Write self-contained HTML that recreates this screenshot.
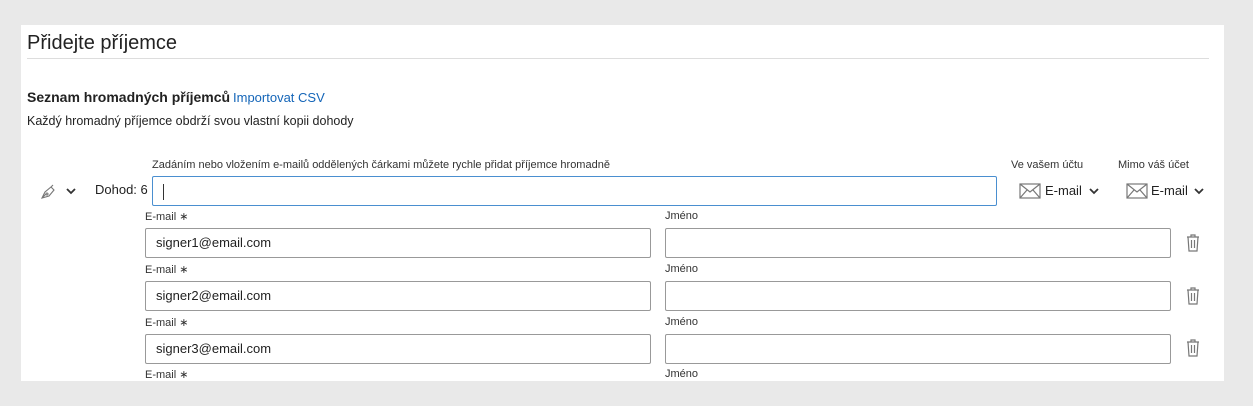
<!DOCTYPE html>
<html><head><meta charset="utf-8"><style>
body{margin:0;width:1253px;height:406px;background:#e9e9e9;font-family:"Liberation Sans",sans-serif;color:#222;position:relative;overflow:hidden}
.p{position:absolute;left:21px;top:25px;width:1203px;height:356px;background:#fff;overflow:hidden}
.a{position:absolute;white-space:nowrap}
.in{position:absolute;border:1px solid #999;border-radius:2px;background:#fff;box-sizing:border-box;height:30px;font-size:13px;line-height:28px;padding-left:10px}
.lb{font-size:11px;color:#333}
</style></head><body>
<div class="p">
<div class="a" style="left:6px;top:7px;font-size:20px;color:#222">Přidejte příjemce</div>
<div class="a" style="left:6px;top:33px;width:1182px;height:1px;background:#ddd"></div>
<div class="a" style="left:6px;top:64px;font-size:14px;font-weight:bold">Seznam hromadných příjemců</div>
<div class="a" style="left:212px;top:65px;font-size:13px;color:#1465b8">Importovat CSV</div>
<div class="a" style="left:6px;top:89px;font-size:12.5px">Každý hromadný příjemce obdrží svou vlastní kopii dohody</div>
<div class="a lb" style="left:131px;top:134px">Zadáním nebo vložením e-mailů oddělených čárkami můžete rychle přidat příjemce hromadně</div>
<svg class="a" style="left:18px;top:158px" width="18" height="18" viewBox="0 0 18 18" fill="none" stroke="#777" stroke-width="1.1"><path d="M3 15 L6 9 L12 4 L15 7 L10 13 Z M3 15 L7 11 M12 4 L14 2"/><circle cx="8" cy="11" r="1"/></svg>
<svg class="a" style="left:44px;top:161px" width="12" height="10"><path d="M2 3 L6 7 L10 3" fill="none" stroke="#333" stroke-width="1.8"/></svg>
<div class="a" style="left:74px;top:157px;font-size:13px">Dohod: 6</div>
<div class="in" style="left:131px;top:151px;width:845px;height:30px;border-color:#4a8fd0"><span style="border-left:1px solid #333;height:16px;display:inline-block;vertical-align:middle"></span></div>
<div class="a lb" style="left:990px;top:134px">Ve vašem účtu</div>
<div class="a lb" style="left:1097px;top:134px">Mimo váš účet</div>
<svg class="a" style="left:998px;top:158px" width="22" height="16" fill="none" stroke="#777" stroke-width="1.2"><rect x="1" y="1" width="20" height="14"/><path d="M1 1 L11 9 L21 1 M1 15 L8 7 M21 15 L14 7"/></svg>
<div class="a" style="left:1024px;top:158px;font-size:13px">E-mail</div>
<svg class="a" style="left:1067px;top:161px" width="12" height="10"><path d="M2 3 L6 7 L10 3" fill="none" stroke="#333" stroke-width="1.8"/></svg>
<svg class="a" style="left:1105px;top:158px" width="22" height="16" fill="none" stroke="#777" stroke-width="1.2"><rect x="1" y="1" width="20" height="14"/><path d="M1 1 L11 9 L21 1 M1 15 L8 7 M21 15 L14 7"/></svg>
<div class="a" style="left:1130px;top:158px;font-size:13px">E-mail</div>
<svg class="a" style="left:1172px;top:161px" width="12" height="10"><path d="M2 3 L6 7 L10 3" fill="none" stroke="#333" stroke-width="1.8"/></svg>

<div class="a lb" style="left:124px;top:185px">E-mail ∗</div><div class="a lb" style="left:644px;top:185px">Jméno</div>
<div class="in" style="left:124px;top:203px;width:506px">signer1@email.com</div><div class="in" style="left:644px;top:203px;width:506px"></div>
<svg class="a" style="left:1164px;top:209px" width="16" height="18" fill="none" stroke="#777" stroke-width="1.2"><path d="M2 3 H14 M6 3 V1 H10 V3 M3 3 L4 17 H12 L13 3 M6.5 6 V14 M9.5 6 V14"/></svg>

<div class="a lb" style="left:124px;top:238px">E-mail ∗</div><div class="a lb" style="left:644px;top:238px">Jméno</div>
<div class="in" style="left:124px;top:256px;width:506px">signer2@email.com</div><div class="in" style="left:644px;top:256px;width:506px"></div>
<svg class="a" style="left:1164px;top:262px" width="16" height="18" fill="none" stroke="#777" stroke-width="1.2"><path d="M2 3 H14 M6 3 V1 H10 V3 M3 3 L4 17 H12 L13 3 M6.5 6 V14 M9.5 6 V14"/></svg>

<div class="a lb" style="left:124px;top:291px">E-mail ∗</div><div class="a lb" style="left:644px;top:291px">Jméno</div>
<div class="in" style="left:124px;top:309px;width:506px">signer3@email.com</div><div class="in" style="left:644px;top:309px;width:506px"></div>
<svg class="a" style="left:1164px;top:314px" width="16" height="18" fill="none" stroke="#777" stroke-width="1.2"><path d="M2 3 H14 M6 3 V1 H10 V3 M3 3 L4 17 H12 L13 3 M6.5 6 V14 M9.5 6 V14"/></svg>

<div class="a lb" style="left:124px;top:343px">E-mail ∗</div><div class="a lb" style="left:644px;top:343px">Jméno</div>
</div>
</body></html>
